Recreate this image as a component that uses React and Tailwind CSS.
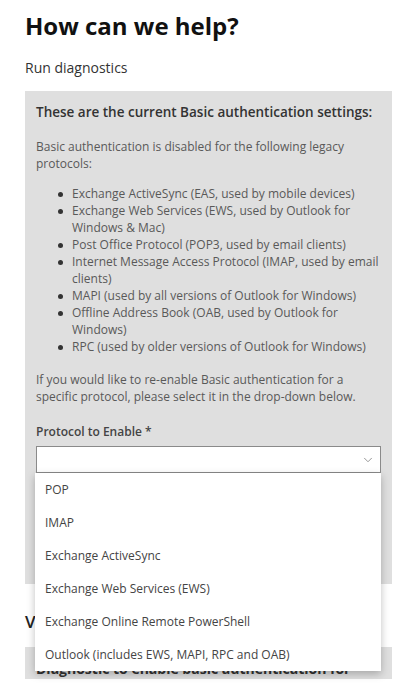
import React from 'react';
import { ChevronDown } from 'lucide-react';

const protocols = [
  'Exchange ActiveSync (EAS, used by mobile devices)',
  'Exchange Web Services (EWS, used by Outlook for Windows & Mac)',
  'Post Office Protocol (POP3, used by email clients)',
  'Internet Message Access Protocol (IMAP, used by email clients)',
  'MAPI (used by all versions of Outlook for Windows)',
  'Offline Address Book (OAB, used by Outlook for Windows)',
  'RPC (used by older versions of Outlook for Windows)',
];

const options = [
  'POP',
  'IMAP',
  'Exchange ActiveSync',
  'Exchange Web Services (EWS)',
  'Exchange Online Remote PowerShell',
  'Outlook (includes EWS, MAPI, RPC and OAB)',
];

const App = () => {
  return (
    <div className="min-h-screen bg-white pl-[25px] pr-[19px] pt-[11px] font-['Open_Sans',sans-serif]">
      <h1 className="text-[24px] leading-[30px] font-bold text-[#111]">How can we help?</h1>
      <p className="mt-[18px] text-[14px] leading-[18px] text-[#333]">Run diagnostics</p>

      <div className="mt-[14px] bg-[#dfdfdf] px-[11px] pt-[12px] pb-[111px]">
        <h2 className="text-[13.5px] leading-[18px] font-semibold text-[#333]">
          These are the current Basic authentication settings:
        </h2>
        <p className="mt-[17px] text-[12px] leading-[17px] text-[#595959]">
          Basic authentication is disabled for the following legacy protocols:
        </p>
        <ul className="mt-[13px] pl-[22px] text-[12px] leading-[17px] text-[#595959]">
          {protocols.map((p) => (
            <li key={p} className="flex">
              <span className="mt-[7px] mr-[9px] h-[5px] w-[5px] shrink-0 rounded-full bg-[#333]" />
              <span>{p}</span>
            </li>
          ))}
        </ul>
        <p className="mt-[16px] text-[12px] leading-[17px] text-[#595959]">
          If you would like to re-enable Basic authentication for a
          <br />
          specific protocol, please select it in the drop-down below.
        </p>
        <label className="mt-[18px] block text-[12px] leading-[18px] font-semibold text-[#444]">
          Protocol to Enable *
        </label>
        <div className="relative mt-[5px]">
          <div className="flex h-[27px] items-center justify-end border border-[#8a8a8a] bg-white pr-[5px]">
            <ChevronDown size={14} strokeWidth={1.5} className="text-[#888]" />
          </div>
          {/* Open drop-down menu */}
          <ul className="absolute left-[-1px] right-0 top-full z-10 bg-white shadow-[0_3px_8px_rgba(0,0,0,0.25)]">
            {options.map((o) => (
              <li key={o} className="flex h-[33px] items-center px-[10px] text-[12px] text-[#444]">
                {o}
              </li>
            ))}
          </ul>
        </div>
      </div>

      <h2 className="mt-[27px] text-[17px] leading-[22px] font-semibold text-[#222]">View results</h2>

      <div className="mt-[14px] h-[32px] overflow-hidden bg-[#dfdfdf] px-[11px] pt-[12px]">
        <p className="text-[14px] leading-[20px] font-bold text-[#333]">
          Diagnostic to enable basic authentication for
        </p>
      </div>
    </div>
  );
};

export default App;
